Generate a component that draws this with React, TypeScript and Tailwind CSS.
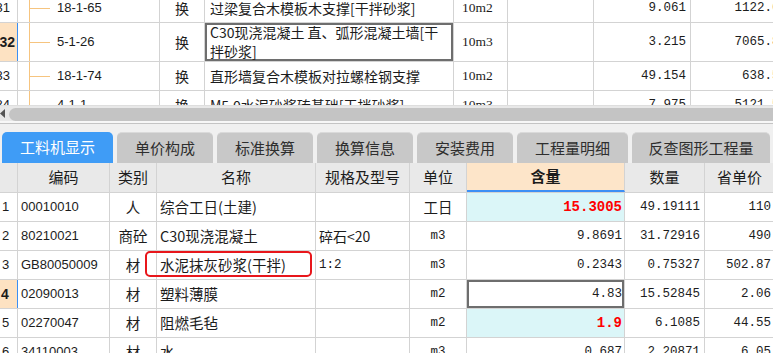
import React from "react";

const cjk = "font-['Noto_Sans_CJK_SC','Noto_Sans',sans-serif]";
const mono = "font-['Liberation_Mono','Noto_Sans_CJK_SC',monospace]";
const sans = "font-['Liberation_Sans','Noto_Sans_CJK_SC',sans-serif]";
const serif = "font-['Liberation_Serif','Noto_Sans_CJK_SC',serif]";
const line = "border-[#d3d3d3]";

type TopRow = {
  n: string;
  code: string;
  name: React.ReactNode;
  unit: string;
  qty: string;
  price: string;
  h: string;
  sel?: boolean;
};

const topRows: TopRow[] = [
  { n: "31", code: "18-1-65", name: "过梁复合木模板木支撑[干拌砂浆]", unit: "10m2", qty: "9.061", price: "1122.62", h: "h-[29px]" },
  {
    n: "32",
    code: "5-1-26",
    name: (
      <>
        C30现浇混凝土 直、弧形混凝土墙[干
        <br />
        拌砂浆]
      </>
    ),
    unit: "10m3",
    qty: "3.215",
    price: "7065.83",
    h: "h-[39px]",
    sel: true,
  },
  { n: "33", code: "18-1-74", name: "直形墙复合木模板对拉螺栓钢支撑", unit: "10m2", qty: "49.154", price: "638.57", h: "h-[29px]" },
  { n: "34", code: "4-1-1", name: "M5.0水泥砂浆砖基础[干拌砂浆]", unit: "10m3", qty: "7.975", price: "5121.53", h: "h-[29px]" },
];

type Row = {
  n: string;
  code: string;
  cat: string;
  name: string;
  spec: string;
  unit: string;
  unitCjk?: boolean;
  amt: string;
  red?: boolean;
  cyan?: boolean;
  boxed?: boolean;
  qty: string;
  price: string;
  sel?: boolean;
};

const rows: Row[] = [
  { n: "1", code: "00010010", cat: "人", name: "综合工日(土建)", spec: "", unit: "工日", unitCjk: true, amt: "15.3005", red: true, cyan: true, qty: "49.19111", price: "110" },
  { n: "2", code: "80210021", cat: "商砼", name: "C30现浇混凝土", spec: "碎石<20", unit: "m3", amt: "9.8691", qty: "31.72916", price: "490" },
  { n: "3", code: "GB80050009", cat: "材", name: "水泥抹灰砂浆(干拌)", spec: "1:2", unit: "m3", amt: "0.2343", qty: "0.75327", price: "502.87" },
  { n: "4", code: "02090013", cat: "材", name: "塑料薄膜", spec: "", unit: "m2", amt: "4.83", boxed: true, qty: "15.52845", price: "2.06", sel: true },
  { n: "5", code: "02270047", cat: "材", name: "阻燃毛毡", spec: "", unit: "m2", amt: "1.9", red: true, cyan: true, qty: "6.1085", price: "44.55" },
  { n: "6", code: "34110003", cat: "材", name: "水", spec: "", unit: "m3", amt: "0.687", qty: "2.20871", price: "6.05" },
];

const tabs = [
  { label: "工料机显示", w: "w-[111px]", active: true },
  { label: "单价构成", w: "w-[96px]" },
  { label: "标准换算", w: "w-[96px]" },
  { label: "换算信息", w: "w-[96px]" },
  { label: "安装费用", w: "w-[96px]" },
  { label: "工程量明细", w: "w-[111px]" },
  { label: "反查图形工程量", w: "w-[138px]" },
];

function TopGrid() {
  return (
    <div className="h-[105px] overflow-hidden bg-white">
      <div className="-mt-[6px] w-[791px]">
        {topRows.map((r) => (
          <div
            key={r.n}
            className={`grid grid-cols-[18px_142px_45px_249px_54px_86px_97px_100px] ${r.h} border-b ${line}`}
          >
            <div
              className={`flex items-center justify-end overflow-hidden border-r ${sans} ${
                r.sel
                  ? "bg-[#fde2c2] border-[#3b8ff2] font-bold text-[14px] pr-[2px]"
                  : `${line} text-[13px] pr-[7px]`
              }`}
            >
              {r.n}
            </div>
            <div className={`flex items-stretch border-r ${line}`}>
              <div className="w-[11px]" />
              <div className="flex w-[21px] items-center border-l border-[#f6c47f]">
                <div className="h-px w-full bg-[#f6c47f]" />
              </div>
              <div className={`flex items-center pl-[7px] ${sans} text-[13px]`}>{r.code}</div>
            </div>
            <div className={`flex items-center justify-center border-r ${line} ${cjk} text-[14px]`}>换</div>
            <div
              className={`flex items-center whitespace-nowrap border-r ${line} pl-[5px] ${cjk} text-[14px] leading-[19px] ${
                r.sel ? "shadow-[inset_0_0_0_2px_#6e6e6e]" : ""
              }`}
            >
              <div>{r.name}</div>
            </div>
            <div className={`flex items-center pl-[8px] border-r ${line} ${serif} text-[13.5px]`}>{r.unit}</div>
            <div className={`border-r ${line}`} />
            <div className={`flex items-center justify-end pr-[4px] border-r ${line} ${mono} text-[12.5px]`}>{r.qty}</div>
            <div className={`flex items-center justify-end pr-[4px] ${mono} text-[12.5px]`}>{r.price}</div>
          </div>
        ))}
      </div>
    </div>
  );
}

function ScrollBar() {
  return (
    <div className="flex h-[16px] items-end border-t border-[#dedede] bg-[#e8e8e8]">
      <div className="flex h-full w-[9px] items-center">
        <svg width="5" height="9" viewBox="0 0 5 9">
          <path d="M5 0 L0 4.5 L5 9 Z" fill="#555" />
        </svg>
      </div>
      <div className="h-[13px] flex-1 rounded-l-[7px] bg-[#c4c4c4]" />
    </div>
  );
}

function Tabs() {
  return (
    <>
      <div className="h-[2px] bg-[#f7f7f7]" />
      <div className="h-px bg-[#c4c4c4]" />
      <div className="flex gap-[4px] bg-[#f0f0f0] pl-[2px] pt-[8px]">
        {tabs.map((t) => (
          <div
            key={t.label}
            className={`flex h-[31px] shrink-0 items-center justify-center rounded-t-[5px] ${t.w} ${cjk} text-[15px] ${
              t.active ? "bg-[#3f9cf6] text-white" : "bg-[#c8c8c8] text-[#2e2e2e] border-t border-[#dadada]"
            }`}
          >
            {t.label}
          </div>
        ))}
      </div>
    </>
  );
}

const cols = "grid grid-cols-[18px_92px_47px_159px_94px_57px_158px_80px_70px]";

function LowerGrid() {
  const heads = ["", "编码", "类别", "名称", "规格及型号", "单位", "含量", "数量", "省单价"];
  return (
    <div className="w-[775px]">
      <div className={`${cols} h-[30px] border-b ${line} bg-[#e9e9e9]`}>
        {heads.map((h, i) => (
          <div
            key={i}
            className={`flex items-center justify-center whitespace-nowrap border-r ${line} ${cjk} text-[15px] ${
              i === 6 ? "bg-[#fde5c9] font-bold border-b-2 border-b-[#3d8ff5]" : ""
            }`}
          >
            {h}
          </div>
        ))}
      </div>
      {rows.map((r) => (
        <div key={r.n} className={`${cols} h-[29px] border-b ${line}`}>
          <div
            className={`flex items-center border-r ${sans} ${
              r.sel ? "bg-[#fde2c2] border-[#3b8ff2] font-bold text-[14px] pl-[1px]" : `${line} text-[13px] pl-[2px]`
            }`}
          >
            {r.n}
          </div>
          <div className={`flex items-center pl-[3px] border-r ${line} ${sans} text-[13px]`}>{r.code}</div>
          <div className={`flex items-center justify-center border-r ${line} ${cjk} text-[14.5px]`}>{r.cat}</div>
          <div className={`flex items-center whitespace-nowrap pl-[3px] border-r ${line} ${cjk} text-[14.5px]`}>{r.name}</div>
          <div
            className={`flex items-center whitespace-nowrap pl-[3px] border-r ${line} ${
              r.spec === "1:2" ? `${mono} text-[12.5px]` : `${cjk} text-[14px]`
            }`}
          >
            {r.spec}
          </div>
          <div
            className={`flex items-center justify-center border-r ${line} ${
              r.unitCjk ? `${cjk} text-[14.5px]` : `${mono} text-[12.5px]`
            }`}
          >
            {r.unit}
          </div>
          <div
            className={`flex items-center justify-end pr-[2px] border-r ${line} ${
              r.cyan ? "bg-[#dbf6f8]" : ""
            } ${r.boxed ? "shadow-[inset_0_0_0_2px_#6e6e6e]" : ""} ${
              r.red ? `${mono} text-[14px] font-bold text-[#ff0000]` : `${mono} text-[12.5px]`
            }`}
          >
            {r.amt}
          </div>
          <div className={`flex items-center justify-end pr-[4px] border-r ${line} ${mono} text-[12.5px]`}>{r.qty}</div>
          <div className={`flex items-center justify-end pr-[4px] ${mono} text-[12.5px]`}>{r.price}</div>
        </div>
      ))}
    </div>
  );
}

export default function App() {
  return (
    <div className="relative h-[353px] w-[773px] overflow-hidden bg-white text-[#1c1c1c]">
      <TopGrid />
      <ScrollBar />
      <Tabs />
      <LowerGrid />
      <div className="pointer-events-none absolute left-[145px] top-[251px] h-[26px] w-[167px] rounded-[5px] border-[2.5px] border-[#e8161b]" />
    </div>
  );
}
